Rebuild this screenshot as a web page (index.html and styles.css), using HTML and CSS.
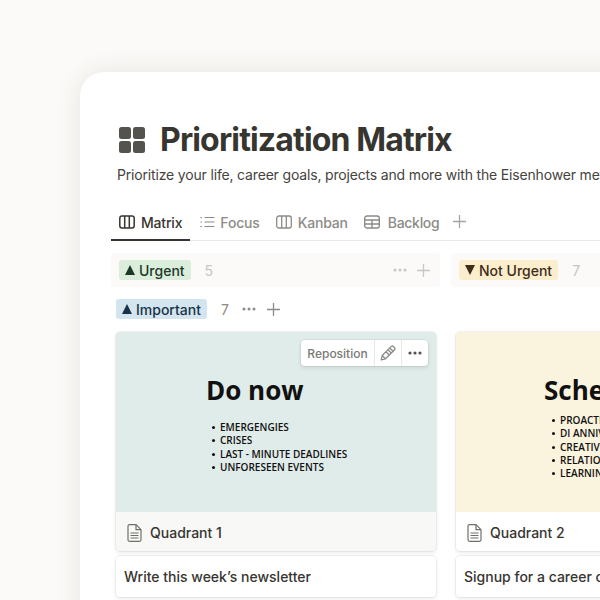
FILE: index.html
```html
<!DOCTYPE html>
<html>
	<head>
		<meta charset="utf-8">
		<title>Prioritization Matrix</title>
		<link rel="stylesheet" href="styles.css">
	</head>
	<body>
		<div class="window">
			<div class="title">
				<svg class="title-icon" width="26" height="26" viewBox="0 0 26 26">
					<rect x="0" y="0" width="12" height="12" rx="2.5"/>
					<rect x="14" y="0" width="12" height="12" rx="2.5"/>
					<rect x="0" y="14" width="12" height="12" rx="2.5"/>
					<rect x="14" y="14" width="12" height="12" rx="2.5"/>
				</svg>
				<h1>Prioritization Matrix</h1>
			</div>
			<p class="desc">Prioritize your life, career goals, projects and more with the Eisenhower method of decision making</p>

			<div class="tabs">
				<div class="tab current">
					<svg width="16" height="14" viewBox="0 0 16 14"><g fill="none" stroke="currentColor" stroke-width="1.5"><rect x="0.8" y="1" width="14.4" height="12" rx="2.2"/><path d="M5.7 1v12M10.3 1v12"/></g></svg>
					<span>Matrix</span>
				</div>
				<div class="tab tab-focus">
					<svg width="15" height="12" viewBox="0 0 15 12"><g fill="none" stroke="currentColor" stroke-width="1.1"><path d="M4.5 1.5h10M4.5 6h10M4.5 10.5h10"/><path d="M0.5 1.5h1.5M0.5 6h1.5M0.5 10.5h1.5"/></g></svg>
					<span>Focus</span>
				</div>
				<div class="tab tab-kanban">
					<svg width="16" height="14" viewBox="0 0 16 14"><g fill="none" stroke="currentColor" stroke-width="1.3"><rect x="0.7" y="1" width="14.6" height="12" rx="2.2"/><path d="M5.7 1v12M10.3 1v12"/></g></svg>
					<span>Kanban</span>
				</div>
				<div class="tab tab-backlog">
					<svg width="16" height="14" viewBox="0 0 16 14"><g fill="none" stroke="currentColor" stroke-width="1.4"><rect x="0.7" y="1" width="14.6" height="12" rx="2.2"/><path d="M0.7 5h14.6M0.7 9h14.6M8 5v8"/></g></svg>
					<span>Backlog</span>
				</div>
				<svg class="tab-add" width="13" height="13" viewBox="0 0 13 13"><path d="M6.5 0v13M0 6.5h13" stroke="currentColor" stroke-width="1.3" fill="none"/></svg>
			</div>

			<div class="col-heads">
				<div class="col-head">
					<span class="tag tag-green"><i class="tri"></i>Urgent</span>
					<span class="count light">5</span>
					<span class="head-tools light">
						<svg class="dots" width="14" height="4" viewBox="0 0 14 4"><circle cx="2" cy="2" r="1.5"/><circle cx="7" cy="2" r="1.5"/><circle cx="12" cy="2" r="1.5"/></svg>
						<svg width="13" height="13" viewBox="0 0 13 13"><path d="M6.5 0v13M0 6.5h13" stroke="currentColor" stroke-width="1.3" fill="none"/></svg>
					</span>
				</div>
				<div class="col-head">
					<span class="tag tag-yellow"><i class="tri down"></i>Not Urgent</span>
					<span class="count light">7</span>
				</div>
			</div>

			<div class="row-head">
				<span class="tag tag-blue"><i class="tri"></i>Important</span>
				<span class="count">7</span>
				<svg class="dots" width="14" height="4" viewBox="0 0 14 4"><circle cx="2" cy="2" r="1.5"/><circle cx="7" cy="2" r="1.5"/><circle cx="12" cy="2" r="1.5"/></svg>
				<svg class="row-add" width="13" height="13" viewBox="0 0 13 13"><path d="M6.5 0v13M0 6.5h13" stroke="currentColor" stroke-width="1.3" fill="none"/></svg>
			</div>

			<div class="board">
				<div class="column">
					<div class="card card-hover">
						<div class="cover cover-green">
							<h2>Do now</h2>
							<ul>
								<li>Emergengies</li>
								<li>Crises</li>
								<li>Last - minute deadlines</li>
								<li>Unforeseen events</li>
							</ul>
							<div class="cover-tools">
								<span class="tool tool-text">Reposition</span>
								<span class="tool tool-pencil">
									<svg width="16" height="16" viewBox="0 0 16 16"><g fill="none" stroke="currentColor" stroke-width="1.3" stroke-linejoin="round"><path d="M1.2 14.8l1-4.3L11.3 1.4a1.4 1.4 0 0 1 2 0l1.3 1.3a1.4 1.4 0 0 1 0 2L5.5 13.8z"/><path d="M2.2 10.5l3.3 3.3M9.8 3l3.2 3.2M8 4.8l3.2 3.2M6 6.8l3.2 3.2"/></g></svg>
								</span>
								<span class="tool">
									<svg width="14" height="4" viewBox="0 0 14 4" fill="currentColor"><circle cx="2" cy="2" r="1.6"/><circle cx="7" cy="2" r="1.6"/><circle cx="12" cy="2" r="1.6"/></svg>
								</span>
							</div>
						</div>
						<div class="caption">
							<svg class="doc" width="15" height="18" viewBox="0 0 15 18"><g fill="none" stroke="currentColor" stroke-width="1.2"><path d="M1 2.2a1.5 1.5 0 0 1 1.5-1.5h6.5l5 5v10.1a1.5 1.5 0 0 1-1.5 1.5h-10a1.5 1.5 0 0 1-1.5-1.5z"/><path d="M9 .7v5h5M3.5 9h8M3.5 11.5h8M3.5 14h8"/></g></svg>
							<span>Quadrant 1</span>
						</div>
					</div>
					<div class="card task">Write this week’s newsletter</div>
				</div>
				<div class="column">
					<div class="card card-plain">
						<div class="cover cover-yellow">
							<h2>Schedule</h2>
							<ul>
								<li>Proactive work</li>
								<li>Di anniversary</li>
								<li>Creative time</li>
								<li>Relationships</li>
								<li>Learning</li>
							</ul>
						</div>
						<div class="caption">
							<svg class="doc" width="15" height="18" viewBox="0 0 15 18"><g fill="none" stroke="currentColor" stroke-width="1.2"><path d="M1 2.2a1.5 1.5 0 0 1 1.5-1.5h6.5l5 5v10.1a1.5 1.5 0 0 1-1.5 1.5h-10a1.5 1.5 0 0 1-1.5-1.5z"/><path d="M9 .7v5h5M3.5 9h8M3.5 11.5h8M3.5 14h8"/></g></svg>
							<span>Quadrant 2</span>
						</div>
					</div>
					<div class="card task">Signup for a career coaching session</div>
				</div>
			</div>
		</div>
	</body>
</html>
```

FILE: styles.css
```css
* {
	margin: 0;
	padding: 0;
	box-sizing: border-box;
}

html, body {
	height: 600px;
	overflow: hidden;
}

body {
	background-color: #FBFAF8;
	font-family: Inter, "Liberation Sans", sans-serif;
	color: #37352F;
}

ul {
	list-style: none;
}

.window {
	width: 760px;
	height: 600px;
	margin: 72px 0 0 80px;
	padding: 54px 0 0 31px;
	background-color: #FFFFFF;
	border-radius: 24px 0 0 0;
	box-shadow: 0 0 24px rgba(80, 70, 50, 0.12);
}

.title {
	display: flex;
	align-items: center;
	gap: 15px;
	margin-left: 8px;
	height: 28px;
}

.title-icon {
	fill: #55534E;
	flex: none;
}

.title h1 {
	font-size: 32px;
	font-weight: 700;
	line-height: 28px;
	white-space: nowrap;
	letter-spacing: -0.85px;
	color: #37352F;
}

.desc {
	margin: 11px 0 0 6px;
	font-size: 14px;
	line-height: 20px;
	white-space: nowrap;
	letter-spacing: -0.17px;
	color: #45433E;
}

.tabs {
	display: flex;
	align-items: flex-start;
	gap: 1px;
	height: 36px;
	margin-top: 20px;
	border-bottom: 1px solid #E9E9E7;
}

.tab {
	display: flex;
	align-items: center;
	gap: 6px;
	height: 36px;
	padding: 0 8px 2px;
	font-size: 14px;
	font-weight: 500;
	letter-spacing: -0.18px;
	color: #8C8B87;
}

.tab svg {
	flex: none;
}

.tab.current {
	color: #37352F;
	border-bottom: 2px solid #37352F;
	padding: 0 8px;
}

.tab-focus {
	gap: 5px;
	margin-left: 1px;
}

.tab-kanban {
	margin-left: -1px;
}

.tab-backlog {
	gap: 8px;
	margin-left: -1px;
	letter-spacing: -0.3px;
}

.tab-add {
	margin: 10px 0 0 5px;
	color: #A5A4A0;
}

.col-heads {
	display: flex;
	gap: 11px;
	margin-top: 12px;
}

.col-head {
	display: flex;
	align-items: center;
	flex: none;
	width: 329px;
	height: 34px;
	padding: 0 10px 0 8px;
	background-color: #FBFAF8;
	border-radius: 4px;
}

.tag {
	display: inline-flex;
	align-items: center;
	gap: 4px;
	height: 20px;
	padding: 0 6px;
	font-size: 14px;
	font-weight: 500;
	border-radius: 3px;
	white-space: nowrap;
}

.tag-green {
	background-color: #DBEDDB;
	color: #1C3829;
}

.tag-yellow {
	background-color: #FBEECC;
	color: #402C1B;
}

.tag-blue {
	background-color: #D3E5EF;
	color: #183347;
}

.tri {
	display: block;
	width: 0;
	height: 0;
	border-left: 5px solid transparent;
	border-right: 5px solid transparent;
	border-bottom: 10px solid currentColor;
}

.tri.down {
	border-bottom: 0;
	border-top: 10px solid currentColor;
}

.count {
	margin-left: 14px;
	font-size: 14px;
	color: #8C8B87;
}

.count.light {
	color: #C7C6C3;
}

.head-tools {
	display: flex;
	align-items: center;
	gap: 10px;
	margin-left: auto;
	color: #C7C6C3;
}

.head-tools .dots {
	fill: #C7C6C3;
}

.row-head {
	display: flex;
	align-items: center;
	height: 20px;
	margin: 12px 0 0 5px;
}

.row-head .count {
	margin-left: 14px;
}

.row-head .dots {
	fill: #8C8B87;
	margin-left: 13px;
}

.row-add {
	margin-left: 11px;
	color: #8C8B87;
}

.board {
	display: flex;
	gap: 20px;
	margin: 13px 0 0 5px;
}

.column {
	display: flex;
	flex-direction: column;
	gap: 5px;
	flex: none;
	width: 320px;
}

.card {
	border-radius: 4px;
	overflow: hidden;
	background-color: #FFFFFF;
	box-shadow: 0 0 0 1px rgba(15, 15, 15, 0.05), 0 2px 4px rgba(15, 15, 15, 0.08);
}

.card-hover {
	background-color: #F8F8F6;
}

.cover {
	position: relative;
	height: 180px;
	font-family: "Open Sans", "Liberation Sans", sans-serif;
	color: #111111;
	white-space: nowrap;
}

.cover-green {
	background-color: #E0ECE9;
	padding: 41px 0 0 90px;
}

.cover-yellow {
	background-color: #FAF3DD;
	padding: 41px 0 0 88px;
}

.cover h2 {
	font-size: 26px;
	font-weight: 700;
	line-height: 34px;
}

.cover ul {
	margin-top: 14px;
	padding-left: 14px;
}

.cover-yellow ul {
	margin-top: 7px;
	padding-left: 16px;
}

.cover li {
	position: relative;
	font-size: 10px;
	font-weight: 600;
	line-height: 13.25px;
	text-transform: uppercase;
}

.cover li::before {
	content: "";
	position: absolute;
	left: -8px;
	top: 5px;
	width: 3px;
	height: 3px;
	border-radius: 50%;
	background-color: #111111;
}

.cover-tools {
	position: absolute;
	top: 8px;
	right: 8px;
	display: flex;
	align-items: stretch;
	height: 26px;
	background-color: #FFFFFF;
	border-radius: 4px;
	box-shadow: 0 0 0 1px rgba(15, 15, 15, 0.05), 0 2px 4px rgba(15, 15, 15, 0.1);
	font-family: Inter, "Liberation Sans", sans-serif;
	color: #7A7975;
}

.tool {
	display: flex;
	align-items: center;
	justify-content: center;
	width: 27px;
	border-left: 1px solid #E9E9E7;
}

.tool-text {
	width: 73px;
	border-left: 0;
	font-size: 12px;
	font-weight: 500;
}

.tool-pencil {
	color: #8C8B87;
}

.tool:last-child {
	color: #55534E;
}

.caption {
	display: flex;
	align-items: center;
	gap: 8px;
	height: 39px;
	padding: 2px 0 0 11px;
	font-size: 14px;
	font-weight: 450;
	color: #37352F;
}

.doc {
	color: #6F6E69;
	flex: none;
}

.task {
	height: 41px;
	line-height: 41px;
	padding-left: 8px;
	font-size: 14px;
	font-weight: 450;
	white-space: nowrap;
	color: #37352F;
}
```
